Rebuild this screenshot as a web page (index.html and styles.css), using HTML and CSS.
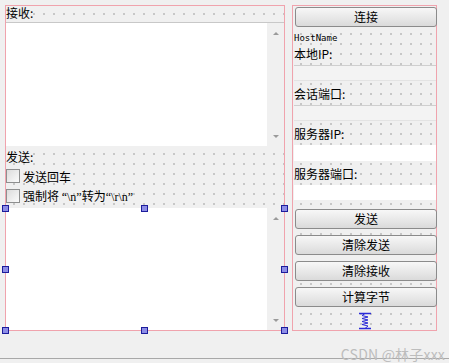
FILE: index.html
```html
<!DOCTYPE html>
<html lang="zh">
<head>
    <meta charset="UTF-8">
    <title>TCP Client - Designer</title>
    <link rel="stylesheet" href="styles.css">
</head>
<body>
    <div class="form">
        <!-- left layout: receive / send -->
        <div class="left">
            <div class="label">接收:</div>
            <div class="edit recv">
                <div class="text-area"></div>
                <div class="scrollbar">
                    <span class="arrow up"></span>
                    <span class="arrow down"></span>
                </div>
            </div>
            <div class="label send-label">发送:</div>
            <label class="check"><span class="box"></span><span>发送回车</span></label>
            <label class="check"><span class="box"></span><span>强制将 <span class="latin">“\n”</span>转为<span class="latin">“\r\n”</span></span></label>
            <div class="edit send">
                <div class="text-area"></div>
                <div class="scrollbar">
                    <span class="arrow up"></span>
                    <span class="arrow down"></span>
                </div>
                <span class="handle tl"></span>
                <span class="handle tm"></span>
                <span class="handle tr"></span>
                <span class="handle ml"></span>
                <span class="handle mr"></span>
                <span class="handle bl"></span>
                <span class="handle bm"></span>
                <span class="handle br"></span>
            </div>
        </div>

        <!-- right layout: connection settings and buttons -->
        <div class="right">
            <button class="btn">连接</button>
            <div class="host">HostName</div>
            <div class="label r-label">本地IP:</div>
            <div class="input readonly"></div>
            <div class="label r-label">会话端口:</div>
            <div class="input readonly"></div>
            <div class="label r-label">服务器IP:</div>
            <div class="input"></div>
            <div class="label r-label">服务器端口:</div>
            <div class="input"></div>
            <button class="btn send-btn">发送</button>
            <button class="btn">清除发送</button>
            <button class="btn">清除接收</button>
            <button class="btn">计算字节</button>
            <div class="spacer">
                <svg width="14" height="18" viewBox="0 0 14 18">
                    <path d="M1 1.5H13M1 16.5H13" stroke="#2a2ad8" stroke-width="1.3" fill="none"/>
                    <path d="M7 1.5L4 3.5L10 5L4 6.5L10 8L4 9.5L10 11L4 12.5L10 14L7 16.5" stroke="#2a2ad8" stroke-width="1" fill="none"/>
                </svg>
            </div>
        </div>
    </div>
    <div class="watermark">CSDN @林子xxx</div>
</body>
</html>
```

FILE: styles.css
```css
body {
    margin: 0;
    width: 449px;
    height: 363px;
    background: #f0f0f0;
    font-family: "Noto Sans CJK SC", "Liberation Sans", sans-serif;
    font-size: 12px;
    color: #000;
    position: relative;
    overflow: hidden;
}
.form {
    display: flex;
    gap: 7px;
    padding: 5px 0 0 5px;
    height: 359px;
    box-sizing: border-box;
    border-bottom: 1px solid #a8a8a8;
}
.left, .right {
    height: 326px;
    box-sizing: border-box;
    border: 1px solid #f0a3ad;
    background-color: #f0f0f0;
    background-image: radial-gradient(circle, #c4c4c4 0.7px, transparent 0.8px);
    background-size: 10px 10px;
    background-position: 3px 3px;
    display: flex;
    flex-direction: column;
}
.left {
    width: 280px;
}
.right {
    width: 145px;
    padding: 1px 0 0 1px;
}
.label {
    height: 16px;
    line-height: 14px;
    white-space: nowrap;
}
.edit {
    position: relative;
    display: flex;
    background: #fff;
    border-top: 1px solid #c8c8c8;
}
.recv {
    height: 123px;
}
.send {
    height: 122px;
    margin-top: 2px;
    border-top: none;
}
.text-area {
    flex: 1;
}
.scrollbar {
    width: 17px;
    background: #f0f0f0;
    position: relative;
}
.arrow {
    position: absolute;
    left: 6px;
    width: 0;
    height: 0;
    border-left: 3px solid transparent;
    border-right: 3px solid transparent;
}
.arrow.up {
    top: 9px;
    border-bottom: 3px solid #9a9a9a;
}
.arrow.down {
    bottom: 8px;
    border-top: 3px solid #9a9a9a;
}
.send-label {
    margin-top: 4px;
    height: 16px;
}
.check {
    display: flex;
    align-items: center;
    height: 20px;
    gap: 3px;
    white-space: pre;
}
.latin {
    font-family: "Liberation Serif", serif;
    font-size: 12px;
}
.box {
    width: 12px;
    height: 12px;
    border: 1px solid #8e8f8f;
    background: linear-gradient(135deg, #dcdcdc, #fbfbfb);
    flex-shrink: 0;
}
.handle {
    position: absolute;
    width: 5px;
    height: 5px;
    border: 1px solid #1c1c9c;
    background: #8d8de6;
    z-index: 2;
}
.tl { left: -4px; top: -3px; }
.tm { left: 135px; top: -3px; }
.tr { right: -4px; top: -3px; }
.ml { left: -4px; top: 58px; }
.mr { right: -4px; top: 58px; }
.bl { left: -4px; bottom: -4px; }
.bm { left: 135px; bottom: -4px; }
.br { right: -4px; bottom: -4px; }
.btn {
    height: 20px;
    width: 142px;
    margin: 6px 0 0 1px;
    padding: 0;
    border: 1px solid #8b8b8b;
    border-radius: 3px;
    background: linear-gradient(#f7f7f7, #e9e9e9 50%, #dadada);
    font-family: inherit;
    font-size: 12px;
    color: #000;
    line-height: 16px;
}
.btn:first-child {
    margin-top: 0;
}
.btn.send-btn {
    margin-top: 6px;
}
.host {
    margin-top: 5px;
    height: 12px;
    font-family: "DejaVu Sans Mono", monospace;
    font-size: 9px;
    line-height: 12px;
}
.r-label {
    height: 20px;
    line-height: 20px;
}
.input {
    height: 16px;
    margin: 1px 0 3px;
    background: #fff;
}
.input.readonly {
    background: #f3f3f3;
    border-top: 1px solid #cfcfcf;
    border-bottom: 1px solid #e3e3e3;
    height: 14px;
}
.spacer {
    display: flex;
    justify-content: center;
    padding-top: 5px;
}
.watermark {
    position: absolute;
    right: 4px;
    bottom: 1px;
    font-size: 14px;
    line-height: 16px;
    color: #bdbdbd;
    letter-spacing: 0.2px;
}
```
